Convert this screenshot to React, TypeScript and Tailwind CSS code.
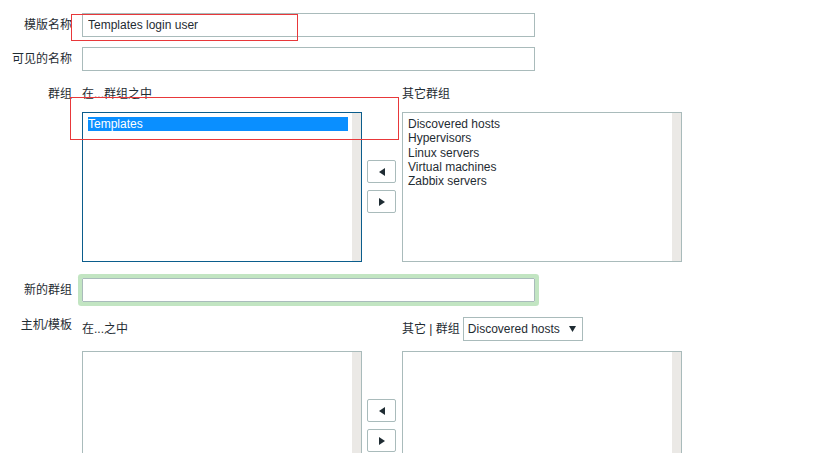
import React from 'react';

const otherGroups = ['Discovered hosts', 'Hypervisors', 'Linux servers', 'Virtual machines', 'Zabbix servers'];

const Arrow = ({ dir }: { dir: 'left' | 'right' }) => (
  <button className="flex h-[23px] w-[29px] items-center justify-center rounded-[2px] border border-[#a9bbbb] bg-white">
    <svg width="6" height="8" viewBox="0 0 6 8">
      {dir === 'left' ? <polygon points="6,0 6,8 0,4" fill="#1f2c33" /> : <polygon points="0,0 0,8 6,4" fill="#1f2c33" />}
    </svg>
  </button>
);

const ListBox = ({ items, selected, active }: { items: string[]; selected?: string; active?: boolean }) => (
  <div
    className={`flex h-[150px] w-[280px] border bg-white ${active ? 'border-[#0b5d8c]' : 'border-[#a9bbbb]'}`}
  >
    <div className="flex-1 pl-[5px] pr-[4px] pt-[4px]">
      {items.map((it) => (
        <div
          key={it}
          className={`h-[14.3px] leading-[14.3px] ${it === selected ? 'bg-[#0a8fff] text-white' : ''}`}
        >
          {it}
        </div>
      ))}
    </div>
    <div className="w-[9px] bg-[#ebe9e6]" />
  </div>
);

const TwinList = ({ left, selected, right, activeLeft }: { left: string[]; selected?: string; right: string[]; activeLeft?: boolean }) => (
  <div className="flex">
    <ListBox items={left} selected={selected} active={activeLeft} />
    <div className="ml-[5px] mr-[6px] flex flex-col gap-[7px] pt-[48px]">
      <Arrow dir="left" />
      <Arrow dir="right" />
    </div>
    <ListBox items={right} />
  </div>
);

const Label = ({ children, className = '' }: { children: React.ReactNode; className?: string }) => (
  <div className={`w-[72px] shrink-0 text-right leading-[14px] ${className}`}>{children}</div>
);

export default function App() {
  return (
    <div className="relative h-[453px] w-[816px] overflow-hidden bg-white pt-[13px] font-['Liberation_Sans','Noto_Sans_CJK_SC',sans-serif] text-[12px] text-[#1f2c33]">
      <div className="flex items-center">
        <Label>模版名称</Label>
        <input
          readOnly
          value="Templates login user"
          className="ml-[10px] h-[24px] w-[453px] border border-[#a9bbbb] px-[5px] text-[12px] text-[#1f2c33] outline-none"
        />
      </div>

      <div className="mt-[10px] flex items-center">
        <Label>可见的名称</Label>
        <input readOnly className="ml-[10px] h-[24px] w-[453px] border border-[#a9bbbb] px-[5px] outline-none" />
      </div>

      <div className="mt-[16px] flex">
        <Label>群组</Label>
        <div className="ml-[10px]">
          <div className="flex h-[14px] leading-[14px]">
            <div className="w-[320px]">在...群组之中</div>
            <div>其它群组</div>
          </div>
          <div className="mt-[11px]">
            <TwinList left={['Templates']} selected="Templates" right={otherGroups} activeLeft />
          </div>
        </div>
      </div>

      <div className="mt-[16px] flex items-center">
        <Label>新的群组</Label>
        <input
          readOnly
          className="ml-[10px] h-[24px] w-[453px] rounded-[1px] border border-[#a9bbbb] px-[5px] shadow-[0_0_0_4px_#c2e5c2] outline-none"
        />
      </div>

      <div className="mt-[15px] flex">
        <Label className="pt-[1px]">主机/模板</Label>
        <div className="ml-[10px]">
          <div className="flex h-[24px] items-center">
            <div className="w-[320px]">在...之中</div>
            <div className="flex items-center">
              <span>其它 | 群组</span>
              <div className="ml-[3px] flex h-[24px] w-[120px] items-center justify-between border border-[#a9bbbb] pl-[4px] pr-[6px]">
                <span>Discovered hosts</span>
                <svg width="7" height="6" viewBox="0 0 7 6">
                  <polygon points="0,0 7,0 3.5,6" fill="#1f2c33" />
                </svg>
              </div>
            </div>
          </div>
          <div className="mt-[10px]">
            <TwinList left={[]} right={[]} />
          </div>
        </div>
      </div>

      <div className="absolute left-[71px] top-[14px] h-[27px] w-[227px] border border-[#e8383a]" />
      <div className="absolute left-[70px] top-[97px] h-[43px] w-[329px] border border-[#e8383a]" />
    </div>
  );
}
